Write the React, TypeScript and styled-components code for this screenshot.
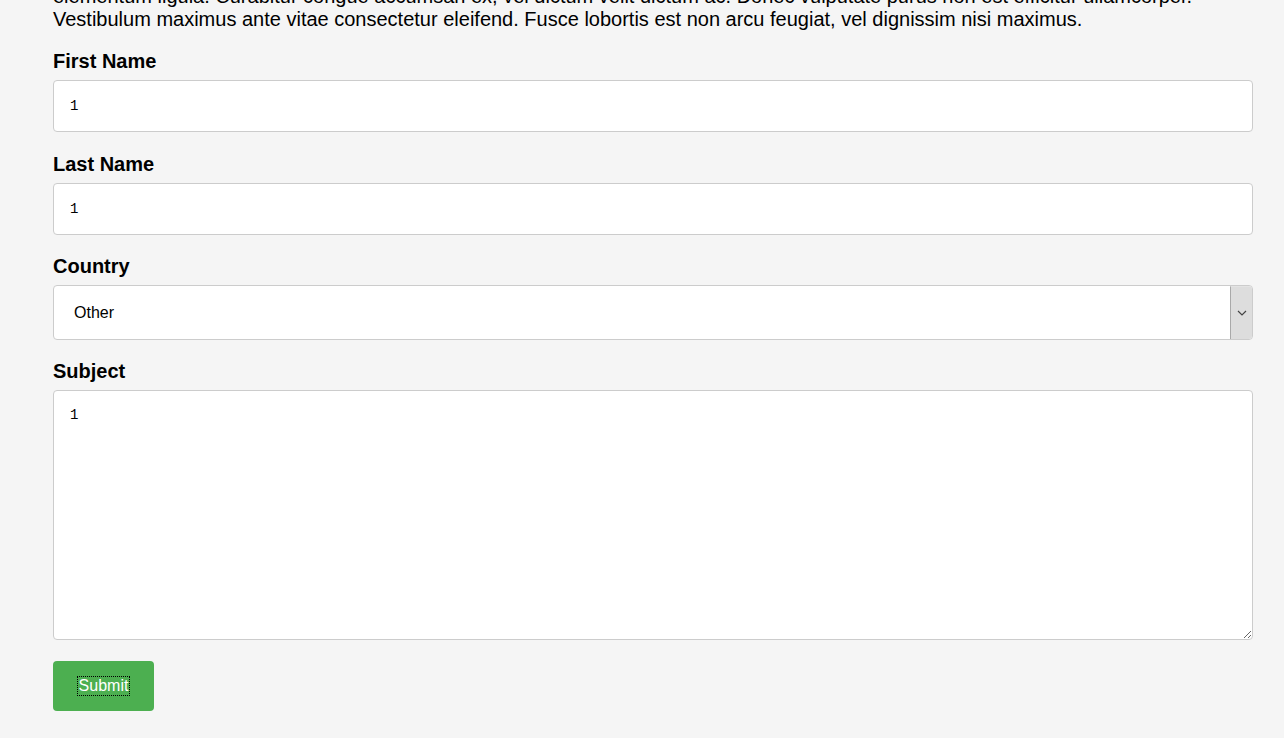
import React from "react";
import styled, { createGlobalStyle } from "styled-components";

const GlobalStyle = createGlobalStyle`
  html, body {
    margin: 0;
    padding: 0;
    background: #f5f5f5;
    overflow: hidden;
  }
  * {
    box-sizing: border-box;
  }
`;

const Page = styled.div`
  font-family: "Liberation Sans", Arial, sans-serif;
  color: #000;
  padding: 0 31px 0 53px;
  height: 738px;
`;

const Intro = styled.p`
  margin: -15px 0 19px;
  font-size: 20px;
  line-height: 23px;
`;

const Line = styled.span`
  display: block;
  white-space: nowrap;
`;

const Form = styled.form`
  display: flex;
  flex-direction: column;
`;

const Label = styled.label`
  display: block;
  font-size: 20px;
  line-height: 23px;
  font-weight: bold;
  margin-bottom: 7px;
`;

const TextInput = styled.input<{ $gap?: number }>`
  display: block;
  width: 100%;
  height: 52px;
  padding: 0 16px;
  margin-bottom: ${(p) => p.$gap ?? 21}px;
  border: 1px solid #ccc;
  border-radius: 4px;
  background: #fff;
  font-family: "Liberation Mono", "Courier New", monospace;
  font-size: 14px;
  color: #000;
  outline: none;
`;

const SelectBox = styled.div`
  display: flex;
  height: 55px;
  margin-bottom: 20px;
  border: 1px solid #ccc;
  border-radius: 4px;
  background: #fff;
  overflow: hidden;
`;

const Select = styled.select`
  flex: 1;
  appearance: none;
  border: none;
  background: transparent;
  padding: 0 20px;
  font-family: "Liberation Sans", Arial, sans-serif;
  font-size: 16px;
  color: #000;
  outline: none;
`;

const ArrowBox = styled.div`
  width: 22px;
  display: flex;
  align-items: center;
  justify-content: center;
  background: #dddddd;
  border-left: 1px solid #a9a9a9;
  border-top: 1px solid #e3e3e3;
  color: #444;
`;

const TextArea = styled.textarea`
  display: block;
  width: 100%;
  height: 250px;
  padding: 16px 16px;
  margin-bottom: 21px;
  border: 1px solid #ccc;
  border-radius: 4px;
  background: #fff;
  font-family: "Liberation Mono", "Courier New", monospace;
  font-size: 14px;
  color: #000;
  resize: vertical;
  outline: none;
`;

const SubmitButton = styled.button`
  width: 101px;
  height: 50px;
  border: none;
  border-radius: 4px;
  background: #4caf50;
  color: #fff;
  font-family: "Liberation Sans", Arial, sans-serif;
  font-size: 16px;
  cursor: pointer;
  display: flex;
  align-items: center;
  justify-content: center;
  padding: 0;
`;

const FocusText = styled.span`
  outline: 1px dotted #000;
  outline-offset: 0;
  padding: 0 1px;
  line-height: 18px;
`;

export default function App() {
  return (
    <Page>
      <GlobalStyle />
      <Intro>
        <Line>
          elementum ligula. Curabitur congue accumsan ex, vel dictum velit dictum ac. Donec vulputate purus non est efficitur ullamcorper.
        </Line>
        <Line>
          Vestibulum maximus ante vitae consectetur eleifend. Fusce lobortis est non arcu feugiat, vel dignissim nisi maximus.
        </Line>
      </Intro>
      <Form onSubmit={(e) => e.preventDefault()}>
        <Label htmlFor="fname">First Name</Label>
        <TextInput id="fname" type="text" defaultValue="1" />

        <Label htmlFor="lname">Last Name</Label>
        <TextInput id="lname" type="text" defaultValue="1" $gap={20} />

        <Label htmlFor="country">Country</Label>
        <SelectBox>
          <Select id="country" defaultValue="other">
            <option value="australia">Australia</option>
            <option value="canada">Canada</option>
            <option value="usa">USA</option>
            <option value="other">Other</option>
          </Select>
          <ArrowBox>
            <svg width="10" height="6" viewBox="0 0 10 6" fill="none">
              <path d="M1 1l4 4 4-4" stroke="#444" strokeWidth="1.2" />
            </svg>
          </ArrowBox>
        </SelectBox>

        <Label htmlFor="subject">Subject</Label>
        <TextArea id="subject" defaultValue="1" />

        <SubmitButton type="submit">
          <FocusText>Submit</FocusText>
        </SubmitButton>
      </Form>
    </Page>
  );
}
